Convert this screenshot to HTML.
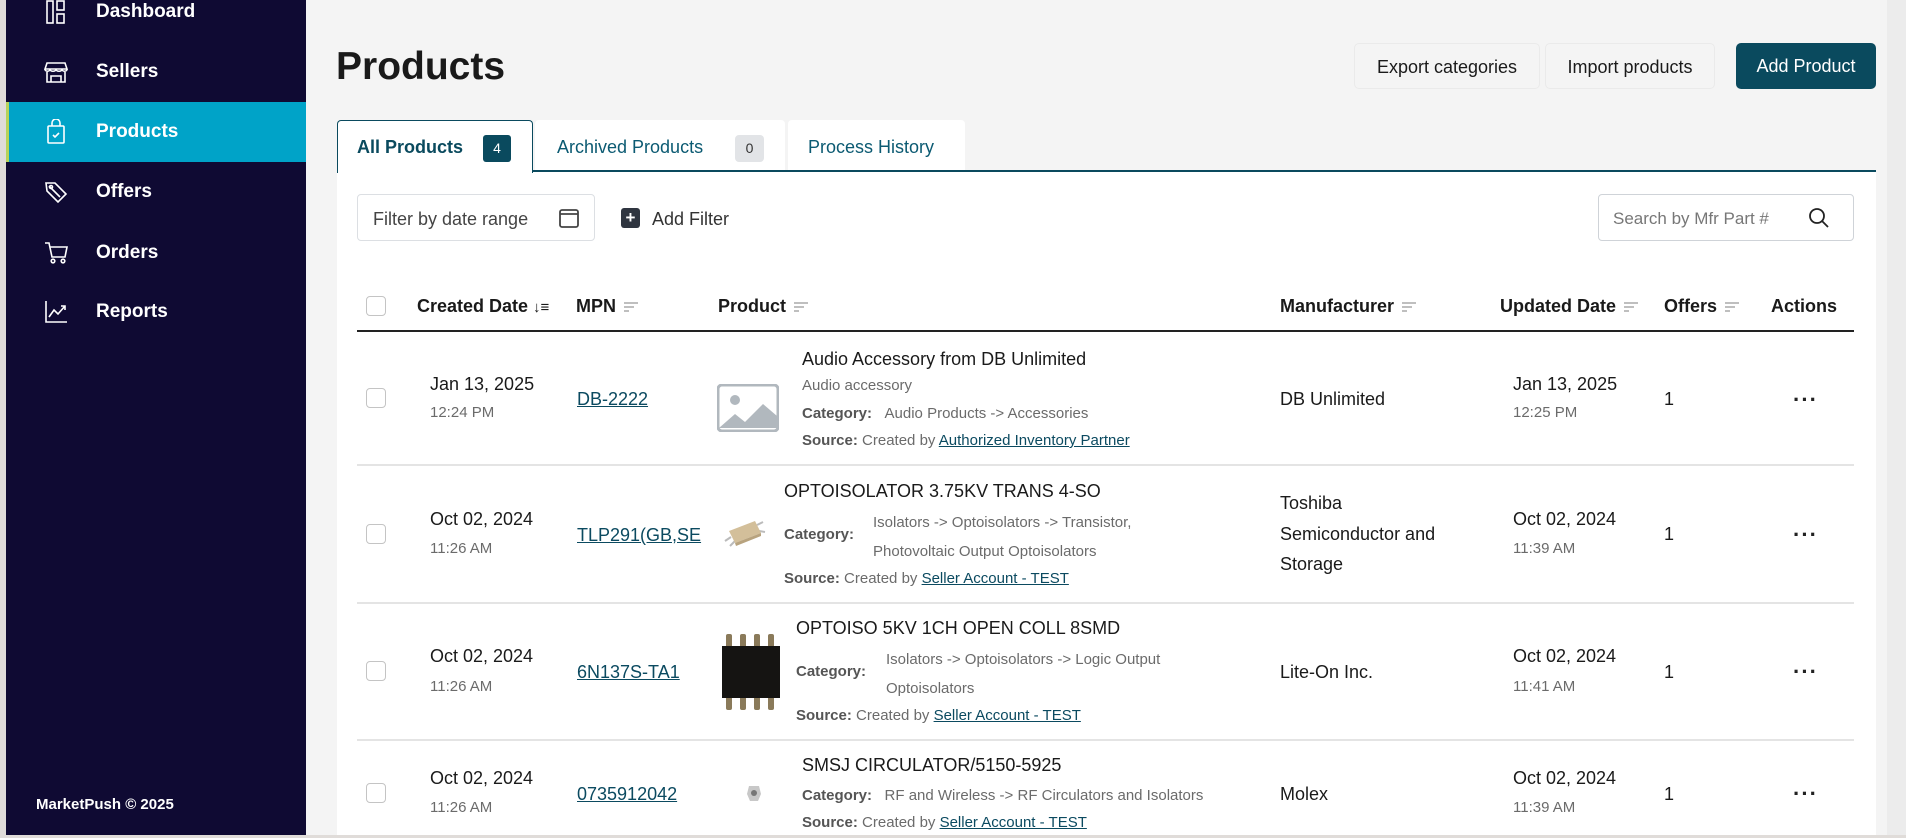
<!DOCTYPE html>
<html><head><meta charset="utf-8"><style>
*{margin:0;padding:0;box-sizing:border-box}
body{width:1906px;height:838px;overflow:hidden;background:#f4f4f4;font-family:"Liberation Sans",sans-serif;position:relative;color:#1a1a1a}
.a{position:absolute;white-space:nowrap;line-height:24px}
.nav{color:#fff;font-weight:bold;font-size:19px}
.ic{position:absolute;left:44px}
.h{font-weight:bold;font-size:18px;color:#1a1a1a}
.m{font-size:18px;color:#1a1a1a}
.s{font-size:15px;color:#6b6b6b}
.lk{font-size:18px;color:#0b4a60;text-decoration:underline}
.sl{font-size:15px;color:#0b4a60;text-decoration:underline}
.lb{font-size:15px;color:#555;font-weight:bold}
.cb{position:absolute;left:366px;width:20px;height:20px;border:1.5px solid #c4c4c4;border-radius:4px;background:#fff}
.sep{position:absolute;left:357px;width:1497px;height:2px;background:#e4e4e4}
.sort{display:inline-block;vertical-align:middle;margin-left:8px}
.dots{position:absolute;left:1793px;font-size:22px;font-weight:bold;letter-spacing:1px;color:#222}
</style></head><body>
<div style="position:absolute;left:0;top:0;width:6px;height:838px;background:#e0dcd9"></div>
<div style="position:absolute;left:6px;top:0;width:300px;height:835px;background:#0f0a33"></div>
<div style="position:absolute;left:6px;top:102px;width:300px;height:60px;background:#00a3c8;border-left:3px solid #b7d35a"></div>
<div style="position:absolute;left:1887px;top:0;width:19px;height:835px;background:#ececec"></div>

<svg class="ic" style="top:0" width="24" height="24" viewBox="0 0 24 24" fill="none" stroke="#fff" stroke-width="1.6"><rect x="3" y="1" width="6" height="22"/><rect x="13" y="1" width="7" height="9"/><rect x="13" y="14" width="7" height="9"/></svg>
<div class="a nav" style="left:96px;top:0">Dashboard</div>
<svg class="ic" style="top:61px" width="24" height="22" viewBox="0 0 24 22" fill="none" stroke="#fff" stroke-width="1.6"><path d="M3 2h18l2 6H1z"/><path d="M1 8c0 3 5 3 5 0c0 3 6 3 6 0c0 3 6 3 6 0c0 3 5 3 5 0"/><path d="M3 11v10h18V11M7 21v-6h10v6"/></svg>
<div class="a nav" style="left:96px;top:60px">Sellers</div>
<svg class="ic" style="top:119px" width="24" height="26" viewBox="0 0 24 26" fill="none" stroke="#fff" stroke-width="1.6"><rect x="4" y="7" width="16" height="17" rx="1"/><path d="M8 7V4a4 4 0 0 1 8 0v3M9 16l2 2 4-4"/></svg>
<div class="a nav" style="left:96px;top:120px">Products</div>
<svg class="ic" style="top:180px" width="24" height="24" viewBox="0 0 24 24" fill="none" stroke="#fff" stroke-width="1.6"><path d="M2 3l1 8 11 11 8-8L11 3z"/><circle cx="7" cy="7" r="1.5"/><path d="M5 6l11 11"/></svg>
<div class="a nav" style="left:96px;top:180px">Offers</div>
<svg class="ic" style="top:241px" width="24" height="24" viewBox="0 0 24 24" fill="none" stroke="#fff" stroke-width="1.6"><path d="M1 2h4l3 14h13l2-10H6"/><circle cx="9" cy="20" r="1.8"/><circle cx="19" cy="20" r="1.8"/></svg>
<div class="a nav" style="left:96px;top:241px">Orders</div>
<svg class="ic" style="top:300px" width="24" height="24" viewBox="0 0 24 24" fill="none" stroke="#fff" stroke-width="1.6"><path d="M2 1v21h21M5 17l5-7 4 4 7-8M17 6h4v4"/></svg>
<div class="a nav" style="left:96px;top:300px">Reports</div>
<div class="a" style="left:36px;top:793px;color:#fff;font-weight:bold;font-size:15px">MarketPush © 2025</div>

<div class="a" style="left:336px;top:44px;line-height:46px;font-size:39px;font-weight:bold;color:#1a1a1a">Products</div>
<div class="a" style="left:1354px;top:43px;width:186px;height:46px;line-height:46px;text-align:center;font-size:18px;border:1px solid #eaeaea;border-radius:5px">Export categories</div>
<div class="a" style="left:1545px;top:43px;width:170px;height:46px;line-height:46px;text-align:center;font-size:18px;border:1px solid #eaeaea;border-radius:5px">Import products</div>
<div class="a" style="left:1736px;top:43px;width:140px;height:46px;line-height:46px;text-align:center;font-size:18px;color:#fff;background:#0a4a5e;border-radius:5px">Add Product</div>

<div style="position:absolute;left:337px;top:170px;width:1539px;height:668px;background:#fff"></div>
<div style="position:absolute;left:337px;top:170px;width:1539px;height:2px;background:#0a4a5e"></div>
<div style="position:absolute;left:337px;top:120px;width:196px;height:53px;background:#fff;border:1.5px solid #0a4a5e;border-bottom:none;border-radius:4px 4px 0 0"></div>
<div class="a" style="left:357px;top:135px;font-size:18px;font-weight:bold;color:#0a4a5e">All Products</div>
<div class="a" style="left:483px;top:135px;width:28px;height:27px;line-height:27px;text-align:center;background:#0a4a5e;color:#fff;font-size:14px;border-radius:3px">4</div>
<div style="position:absolute;left:535px;top:120px;width:250px;height:50px;background:#fff;border-radius:4px 4px 0 0"></div>
<div class="a" style="left:557px;top:135px;font-size:18px;color:#0b5a72">Archived Products</div>
<div class="a" style="left:735px;top:135px;width:29px;height:27px;line-height:27px;text-align:center;background:#e2e4e7;color:#333;font-size:14px;border-radius:4px">0</div>
<div style="position:absolute;left:788px;top:120px;width:177px;height:50px;background:#fff;border-radius:4px 4px 0 0"></div>
<div class="a" style="left:808px;top:135px;font-size:18px;color:#0b5a72">Process History</div>

<div style="position:absolute;left:357px;top:194px;width:238px;height:47px;border:1px solid #dcdfe3;border-radius:4px"></div>
<div class="a" style="left:373px;top:207px;font-size:18px;color:#444">Filter by date range</div>
<svg style="position:absolute;left:558px;top:207px" width="22" height="22" viewBox="0 0 22 22" fill="none" stroke="#444" stroke-width="1.8"><rect x="2" y="3" width="18" height="17" rx="2"/><path d="M2 7h18"/></svg>
<div style="position:absolute;left:621px;top:208px;width:19px;height:20px;background:#2f3540;border-radius:3px;color:#fff;font-size:17px;line-height:19px;text-align:center;font-weight:bold">+</div>
<div class="a" style="left:652px;top:207px;font-size:18px;color:#333">Add Filter</div>
<div style="position:absolute;left:1598px;top:194px;width:256px;height:47px;border:1px solid #cfd3d8;border-radius:4px"></div>
<div class="a" style="left:1613px;top:207px;font-size:17px;color:#777">Search by Mfr Part #</div>
<svg style="position:absolute;left:1808px;top:207px" width="22" height="22" viewBox="0 0 22 22" fill="none" stroke="#222" stroke-width="1.8"><circle cx="9" cy="9" r="7"/><path d="M14 14l6 6"/></svg>

<div class="cb" style="top:296px"></div>
<div class="a h" style="left:417px;top:294px">Created Date <span style="font-size:15px">↓≡</span></div>
<div class="a h" style="left:576px;top:294px">MPN<svg class="sort" width="14" height="10"><path d="M0 1h14M0 5h10M0 9h5" stroke="#aaa" stroke-width="1.4"/></svg></div>
<div class="a h" style="left:718px;top:294px">Product<svg class="sort" width="14" height="10"><path d="M0 1h14M0 5h10M0 9h5" stroke="#aaa" stroke-width="1.4"/></svg></div>
<div class="a h" style="left:1280px;top:294px">Manufacturer<svg class="sort" width="14" height="10"><path d="M0 1h14M0 5h10M0 9h5" stroke="#aaa" stroke-width="1.4"/></svg></div>
<div class="a h" style="left:1500px;top:294px">Updated Date<svg class="sort" width="14" height="10"><path d="M0 1h14M0 5h10M0 9h5" stroke="#aaa" stroke-width="1.4"/></svg></div>
<div class="a h" style="left:1664px;top:294px">Offers<svg class="sort" width="14" height="10"><path d="M0 1h14M0 5h10M0 9h5" stroke="#aaa" stroke-width="1.4"/></svg></div>
<div class="a h" style="left:1771px;top:294px">Actions</div>
<div style="position:absolute;left:357px;top:330px;width:1497px;height:2px;background:#222"></div>

<div class="cb" style="top:388px"></div>
<div class="a m" style="left:430px;top:372px">Jan 13, 2025</div>
<div class="a s" style="left:430px;top:401px">12:24 PM</div>
<div class="a lk" style="left:577px;top:387px">DB-2222</div>
<svg style="position:absolute;left:717px;top:384px" width="62" height="48" viewBox="0 0 62 48"><rect x="1" y="1" width="60" height="46" rx="4" fill="#fff" stroke="#b1b8be" stroke-width="3"/><circle cx="18" cy="16" r="5" fill="#b1b8be"/><path d="M2 44L18 30l10 8 18-18 14 12v12z" fill="#b1b8be"/></svg>
<div class="a m" style="left:802px;top:347px">Audio Accessory from DB Unlimited</div>
<div class="a s" style="left:802px;top:374px">Audio accessory</div>
<div class="a" style="left:802px;top:402px;font-size:15px"><span class="lb">Category:</span>&nbsp;&nbsp;&nbsp;<span style="color:#6b6b6b">Audio Products -&gt; Accessories</span></div>
<div class="a" style="left:802px;top:429px;font-size:15px"><span class="lb">Source:</span> <span style="color:#6b6b6b">Created by</span> <span class="sl">Authorized Inventory Partner</span></div>
<div class="a m" style="left:1280px;top:387px">DB Unlimited</div>
<div class="a m" style="left:1513px;top:372px">Jan 13, 2025</div>
<div class="a s" style="left:1513px;top:401px">12:25 PM</div>
<div class="a m" style="left:1664px;top:387px">1</div>
<div class="a dots" style="top:388px">···</div>
<div class="sep" style="top:464px"></div>

<div class="cb" style="top:524px"></div>
<div class="a m" style="left:430px;top:507px">Oct 02, 2024</div>
<div class="a s" style="left:430px;top:537px">11:26 AM</div>
<div class="a lk" style="left:577px;top:523px">TLP291(GB,SE</div>
<svg style="position:absolute;left:721px;top:515px" width="50" height="34" viewBox="0 0 50 34"><g stroke="#bbb" stroke-width="2"><path d="M10 22l-6 4M14 26l-5 5M36 10l6-3M38 16l6 1"/></g><path d="M8 16L34 6l6 12-26 10z" fill="#d3bf9a"/><path d="M14 28l26-10v3L15 31z" fill="#b8a37e"/></svg>
<div class="a m" style="left:784px;top:479px">OPTOISOLATOR 3.75KV TRANS 4-SO</div>
<div class="a lb" style="left:784px;top:523px">Category:</div>
<div class="a s" style="left:873px;top:511px">Isolators -&gt; Optoisolators -&gt; Transistor,</div>
<div class="a s" style="left:873px;top:540px">Photovoltaic Output Optoisolators</div>
<div class="a" style="left:784px;top:567px;font-size:15px"><span class="lb">Source:</span> <span style="color:#6b6b6b">Created by</span> <span class="sl">Seller Account - TEST</span></div>
<div class="a m" style="left:1280px;top:491px">Toshiba</div>
<div class="a m" style="left:1280px;top:522px">Semiconductor and</div>
<div class="a m" style="left:1280px;top:552px">Storage</div>
<div class="a m" style="left:1513px;top:507px">Oct 02, 2024</div>
<div class="a s" style="left:1513px;top:537px">11:39 AM</div>
<div class="a m" style="left:1664px;top:522px">1</div>
<div class="a dots" style="top:523px">···</div>
<div class="sep" style="top:602px"></div>

<div class="cb" style="top:661px"></div>
<div class="a m" style="left:430px;top:644px">Oct 02, 2024</div>
<div class="a s" style="left:430px;top:675px">11:26 AM</div>
<div class="a lk" style="left:577px;top:660px">6N137S-TA1</div>
<svg style="position:absolute;left:721px;top:632px" width="60" height="80" viewBox="0 0 60 80"><g fill="#8a7a5a"><rect x="5" y="2" width="6" height="14" rx="2"/><rect x="19" y="2" width="6" height="14" rx="2"/><rect x="33" y="2" width="6" height="14" rx="2"/><rect x="47" y="2" width="6" height="14" rx="2"/><rect x="5" y="64" width="6" height="14" rx="2"/><rect x="19" y="64" width="6" height="14" rx="2"/><rect x="33" y="64" width="6" height="14" rx="2"/><rect x="47" y="64" width="6" height="14" rx="2"/></g><rect x="1" y="14" width="58" height="52" fill="#151412"/></svg>
<div class="a m" style="left:796px;top:616px">OPTOISO 5KV 1CH OPEN COLL 8SMD</div>
<div class="a lb" style="left:796px;top:660px">Category:</div>
<div class="a s" style="left:886px;top:648px">Isolators -&gt; Optoisolators -&gt; Logic Output</div>
<div class="a s" style="left:886px;top:677px">Optoisolators</div>
<div class="a" style="left:796px;top:704px;font-size:15px"><span class="lb">Source:</span> <span style="color:#6b6b6b">Created by</span> <span class="sl">Seller Account - TEST</span></div>
<div class="a m" style="left:1280px;top:660px">Lite-On Inc.</div>
<div class="a m" style="left:1513px;top:644px">Oct 02, 2024</div>
<div class="a s" style="left:1513px;top:675px">11:41 AM</div>
<div class="a m" style="left:1664px;top:660px">1</div>
<div class="a dots" style="top:660px">···</div>
<div class="sep" style="top:739px"></div>

<div class="cb" style="top:783px"></div>
<div class="a m" style="left:430px;top:766px">Oct 02, 2024</div>
<div class="a s" style="left:430px;top:796px">11:26 AM</div>
<div class="a lk" style="left:577px;top:782px">0735912042</div>
<svg style="position:absolute;left:746px;top:784px" width="16" height="18" viewBox="0 0 16 18"><path d="M3 2h10l2 8-3 7H4L1 10z" fill="#c8c8c8"/><circle cx="8" cy="9" r="3" fill="#777"/></svg>
<div class="a m" style="left:802px;top:753px">SMSJ CIRCULATOR/5150-5925</div>
<div class="a" style="left:802px;top:784px;font-size:15px"><span class="lb">Category:</span>&nbsp;&nbsp;&nbsp;<span style="color:#6b6b6b">RF and Wireless -&gt; RF Circulators and Isolators</span></div>
<div class="a" style="left:802px;top:811px;font-size:15px"><span class="lb">Source:</span> <span style="color:#6b6b6b">Created by</span> <span class="sl">Seller Account - TEST</span></div>
<div class="a m" style="left:1280px;top:782px">Molex</div>
<div class="a m" style="left:1513px;top:766px">Oct 02, 2024</div>
<div class="a s" style="left:1513px;top:796px">11:39 AM</div>
<div class="a m" style="left:1664px;top:782px">1</div>
<div class="a dots" style="top:782px">···</div>
<div style="position:absolute;left:0;top:835px;width:1906px;height:3px;background:#e0dcd9"></div>
</body></html>
